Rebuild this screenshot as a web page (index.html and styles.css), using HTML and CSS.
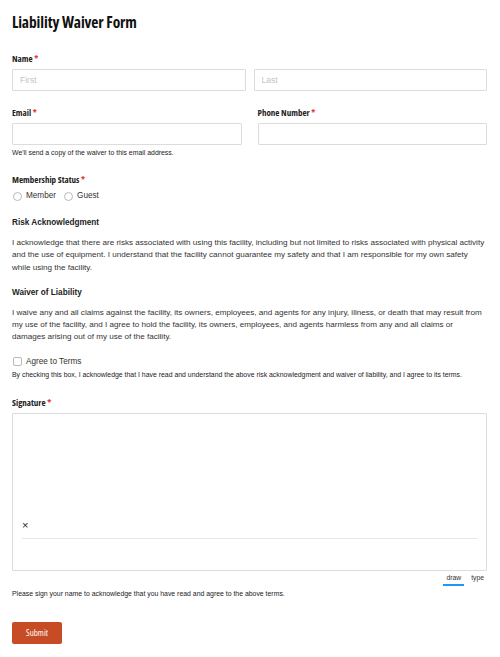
FILE: index.html
```html
<!DOCTYPE html>
<html lang="en">
<head>
<meta charset="utf-8">
<title>Liability Waiver Form</title>
<link rel="stylesheet" href="styles.css">
</head>
<body>
<form class="form">
  <h1 class="title">Liability Waiver Form</h1>

  <div class="field field-name">
    <label class="label">Name <span class="req">*</span></label>
    <div class="row row-name">
      <input class="input" type="text" placeholder="First">
      <input class="input" type="text" placeholder="Last">
    </div>
  </div>

  <div class="row row-contact">
    <div class="field col">
      <label class="label">Email <span class="req">*</span></label>
      <input class="input" type="email">
      <div class="hint">We'll send a copy of the waiver to this email address.</div>
    </div>
    <div class="field col">
      <label class="label">Phone Number <span class="req">*</span></label>
      <input class="input" type="tel">
    </div>
  </div>

  <div class="field field-member">
    <label class="label">Membership Status <span class="req">*</span></label>
    <div class="radios">
      <label class="choice"><span class="radio"></span>Member</label>
      <label class="choice"><span class="radio"></span>Guest</label>
    </div>
  </div>

  <section class="block">
    <h2 class="block-title">Risk Acknowledgment</h2>
    <p class="text">I acknowledge that there are risks associated with using this facility, including but not limited to risks associated with physical activity and the use of equipment. I understand that the facility cannot guarantee my safety and that I am responsible for my own safety while using the facility.</p>
  </section>

  <section class="block block-waiver">
    <h2 class="block-title">Waiver of Liability</h2>
    <p class="text">I waive any and all claims against the facility, its owners, employees, and agents for any injury, illness, or death that may result from my use of the facility, and I agree to hold the facility, its owners, employees, and agents harmless from any and all claims or damages arising out of my use of the facility.</p>
  </section>

  <div class="field field-agree">
    <label class="choice"><span class="checkbox"></span>Agree to Terms</label>
    <div class="hint hint-agree">By checking this box, I acknowledge that I have read and understand the above risk acknowledgment and waiver of liability, and I agree to its terms.</div>
  </div>

  <div class="field field-sign">
    <label class="label">Signature <span class="req">*</span></label>
    <div class="sigpad">
      <div class="sigline"><span class="sigx">&#215;</span></div>
    </div>
    <div class="sigtabs">
      <span class="tab tab-active">draw</span>
      <span class="tab">type</span>
    </div>
    <div class="hint hint-sign">Please sign your name to acknowledge that you have read and agree to the above terms.</div>
  </div>

  <button class="submit" type="button">Submit</button>
</form>
</body>
</html>
```

FILE: styles.css
```css
html, body {
  margin: 0;
  padding: 0;
  background: #ffffff;
}

body {
  font-family: "Liberation Sans", Arial, sans-serif;
  color: #333333;
}

.form {
  width: 475px;
  padding: 12px 13px 0 12px;
  display: flex;
  flex-direction: column;
}

.title {
  margin: 0;
  font-family: "Open Sans", sans-serif;
  font-stretch: 75%;
  font-weight: 700;
  font-size: 15.5px;
  line-height: 20px;
  color: #111111;
  letter-spacing: -0.1px;
}

.label {
  display: block;
  font-family: "Open Sans", sans-serif;
  font-stretch: 75%;
  font-weight: 700;
  font-size: 9px;
  line-height: 12px;
  color: #222222;
  margin-bottom: 4px;
}

.req {
  color: #e03b3b;
}

.field-name {
  margin-top: 21px;
}

.row {
  display: flex;
}

.row-name {
  gap: 8px;
}

.row-contact {
  gap: 16px;
  margin-top: 16px;
}

.col {
  flex: 1;
  min-width: 0;
}

.input {
  display: block;
  box-sizing: border-box;
  width: 100%;
  height: 22px;
  margin: 0;
  padding: 0 7px;
  border: 1px solid #dcdcdc;
  border-radius: 1px;
  font-family: "Liberation Sans", Arial, sans-serif;
  font-size: 8.5px;
  color: #333333;
  background: #ffffff;
  outline: none;
}

.input::placeholder {
  color: #c4c4c4;
}

.hint {
  font-size: 6.9px;
  line-height: 10px;
  color: #222222;
  margin-top: 3px;
}

.field-member {
  margin-top: 16px;
}

.radios {
  display: flex;
  gap: 7px;
  margin-top: 0;
}

.choice {
  display: flex;
  align-items: center;
  font-size: 8.2px;
  line-height: 12px;
  color: #333333;
}

.radio {
  box-sizing: border-box;
  width: 9px;
  height: 9px;
  border: 1px solid #b9b9b9;
  border-radius: 50%;
  margin-right: 4px;
  margin-left: 1px;
}

.checkbox {
  box-sizing: border-box;
  width: 9px;
  height: 9px;
  border: 1px solid #b9b9b9;
  border-radius: 2px;
  margin-right: 4px;
  margin-left: 1px;
}

.block {
  margin-top: 15px;
}

.block-waiver {
  margin-top: 13px;
}

.block-title {
  margin: 0;
  font-size: 8.2px;
  line-height: 12px;
  font-weight: 700;
  color: #222222;
}

.text {
  margin: 8px 0 0 0;
  font-size: 8.1px;
  line-height: 12.3px;
  color: #333333;
}

.field-agree {
  margin-top: 12px;
}

.hint-agree {
  margin-top: 2px;
}

.field-sign {
  margin-top: 17px;
}

.sigpad {
  box-sizing: border-box;
  height: 158px;
  border: 1px solid #dcdcdc;
  border-radius: 1px;
  display: flex;
  flex-direction: column;
  justify-content: flex-end;
  padding: 0 9px 31px 9px;
}

.sigline {
  position: relative;
  border-bottom: 1px solid #e6e6e6;
  height: 14px;
}

.sigx {
  position: absolute;
  left: 0;
  top: -5px;
  font-family: "Liberation Sans", Arial, sans-serif;
  font-size: 11px;
  line-height: 12px;
  color: #1f1f1f;
}

.sigtabs {
  display: flex;
  justify-content: flex-end;
  gap: 4px;
  padding-right: 0;
  margin-top: 2px;
}

.tab {
  font-size: 6.8px;
  line-height: 10px;
  color: #333333;
  padding: 0 3px 1px 3px;
  border-bottom: 2px solid transparent;
}

.tab-active {
  border-bottom-color: #2196f3;
}

.hint-sign {
  margin-top: 3px;
}

.submit {
  align-self: flex-start;
  margin-top: 23px;
  width: 50px;
  height: 22px;
  padding: 0;
  border: none;
  border-radius: 2px;
  background: #c74b24;
  color: #ffffff;
  font-family: "Open Sans", sans-serif;
  font-stretch: 75%;
  font-size: 9px;
  font-weight: 400;
  cursor: pointer;
}
```
